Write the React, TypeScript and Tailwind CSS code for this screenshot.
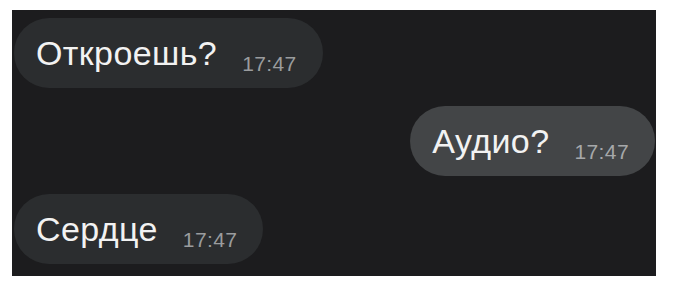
const MESSAGES = [
  { id: 1, text: "Откроешь?", time: "17:47", mine: false },
  { id: 2, text: "Аудио?", time: "17:47", mine: true },
  { id: 3, text: "Сердце", time: "17:47", mine: false },
];

function Bubble({ text, time, mine }: { text: string; time: string; mine: boolean }) {
  return (
    <div
      className={`flex h-[70px] items-center rounded-full pl-[22px] pr-[26px] ${
        mine ? "self-end bg-[#434547]" : "self-start bg-[#2b2d2f]"
      }`}
    >
      <div className="flex items-baseline gap-[25px]">
        <span className="text-[34px] leading-[34px] tracking-[0.4px] text-[#f2f2f2]">{text}</span>
        <span
          className={`translate-y-[6px] text-[21px] leading-[21px] tracking-[0.4px] ${
            mine ? "text-[#a6a8aa]" : "text-[#9a9c9e]"
          }`}
        >
          {time}
        </span>
      </div>
    </div>
  );
}

export default function App() {
  return (
    <div
      className="h-[291px] w-[676px] bg-white pl-[12px] pt-[10px]"
      style={{ fontFamily: "'Liberation Sans', Arial, sans-serif" }}
    >
      <div className="flex h-[266px] w-[644px] flex-col gap-[18px] bg-[#1c1c1e] pl-[2px] pr-[1px] pt-[8px]">
        {MESSAGES.map((m) => (
          <Bubble key={m.id} text={m.text} time={m.time} mine={m.mine} />
        ))}
      </div>
    </div>
  );
}
